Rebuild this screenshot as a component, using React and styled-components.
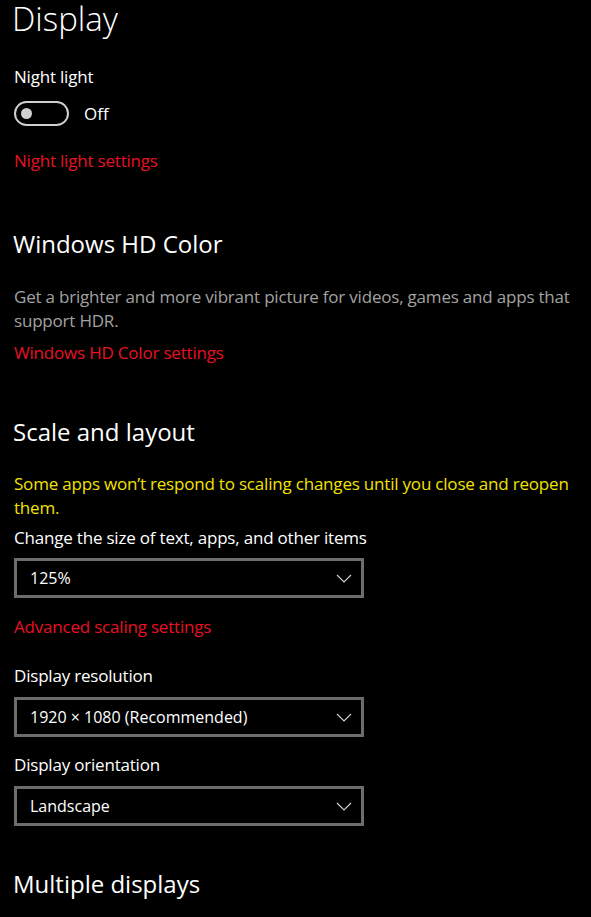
import React, { useState } from 'react';
import styled, { createGlobalStyle } from 'styled-components';

const GlobalStyle = createGlobalStyle`
  html, body {
    margin: 0;
    padding: 0;
    background: #000;
  }
  body {
    font-family: 'Open Sans', 'Noto Sans', sans-serif;
    color: #fff;
    -webkit-font-smoothing: antialiased;
  }
`;

const Page = styled.div`
  display: flex;
  flex-direction: column;
  align-items: flex-start;
  width: 565px;
  padding: 0 0 0 12px;
  min-height: 917px;
  background: #000;
`;

const Title = styled.h1`
  margin: 0;
  font-size: 33px;
  font-weight: 300;
  line-height: 38px;
`;

const Heading = styled.h2`
  margin: ${(p) => p.$top}px 0 0 1px;
  font-size: 24px;
  font-weight: 400;
  line-height: 32px;
`;

const Label = styled.div`
  margin: ${(p) => p.$top}px 0 0 2px;
  font-size: 17px;
  letter-spacing: -0.2px;
  line-height: 24px;
`;

const Text = styled.p`
  margin: ${(p) => p.$top}px 0 0 2px;
  font-size: 17px;
  letter-spacing: -0.2px;
  line-height: 24px;
  color: ${(p) => (p.$warn ? '#f2e200' : '#a2a2a2')};
`;

const Link = styled.a`
  display: block;
  margin: ${(p) => p.$top}px 0 0 2px;
  font-size: 17px;
  letter-spacing: -0.2px;
  line-height: 24px;
  color: #e81123;
  text-decoration: none;
  cursor: pointer;
`;

const ToggleRow = styled.div`
  display: flex;
  align-items: center;
  gap: 15px;
  margin: 12px 0 0 2px;
  font-size: 17px;
`;

const Track = styled.button`
  position: relative;
  width: 55px;
  height: 25px;
  padding: 0;
  border: 2px solid #cfcfcf;
  border-radius: 13px;
  background: ${(p) => (p.$on ? '#e81123' : 'transparent')};
  cursor: pointer;
`;

const Knob = styled.span`
  position: absolute;
  top: 5px;
  left: ${(p) => (p.$on ? '36px' : '5px')};
  width: 11px;
  height: 11px;
  border-radius: 50%;
  background: #cfcfcf;
`;

const Select = styled.div`
  display: flex;
  align-items: center;
  justify-content: space-between;
  box-sizing: border-box;
  width: 350px;
  height: 40px;
  margin: ${(p) => p.$top}px 0 0 2px;
  padding: 0 9px 0 13px;
  border: 3px solid #6c6c6c;
  font-size: 16px;
  cursor: pointer;
`;

const Chevron = () => (
  <svg width="16" height="9" viewBox="0 0 16 9" fill="none">
    <polyline points="1,1 8,8 15,1" stroke="#cfcfcf" strokeWidth="1.2" />
  </svg>
);

const Dropdown = ({ value, top }) => (
  <Select $top={top}>
    <span>{value}</span>
    <Chevron />
  </Select>
);

export default function App() {
  const [night, setNight] = useState(false);

  return (
    <>
      <GlobalStyle />
      <Page>
        <Title>Display</Title>

        <Label $top={27}>Night light</Label>
        <ToggleRow>
          <Track $on={night} onClick={() => setNight(!night)}>
            <Knob $on={night} />
          </Track>
          <span>{night ? 'On' : 'Off'}</span>
        </ToggleRow>
        <Link $top={23}>Night light settings</Link>

        <Heading $top={55}>Windows HD Color</Heading>
        <Text $top={25}>
          Get a brighter and more vibrant picture for videos, games and apps that support HDR.
        </Text>
        <Link $top={8}>Windows HD Color settings</Link>

        <Heading $top={51}>Scale and layout</Heading>
        <Text $top={24} $warn>
          Some apps won’t respond to scaling changes until you close and reopen them.
        </Text>
        <Label $top={6}>Change the size of text, apps, and other items</Label>
        <Dropdown top={8} value="125%" />
        <Link $top={17}>Advanced scaling settings</Link>

        <Label $top={25}>Display resolution</Label>
        <Dropdown top={9} value="1920 × 1080 (Recommended)" />
        <Label $top={16}>Display orientation</Label>
        <Dropdown top={9} value="Landscape" />

        <Heading $top={42}>Multiple displays</Heading>
      </Page>
    </>
  );
}
